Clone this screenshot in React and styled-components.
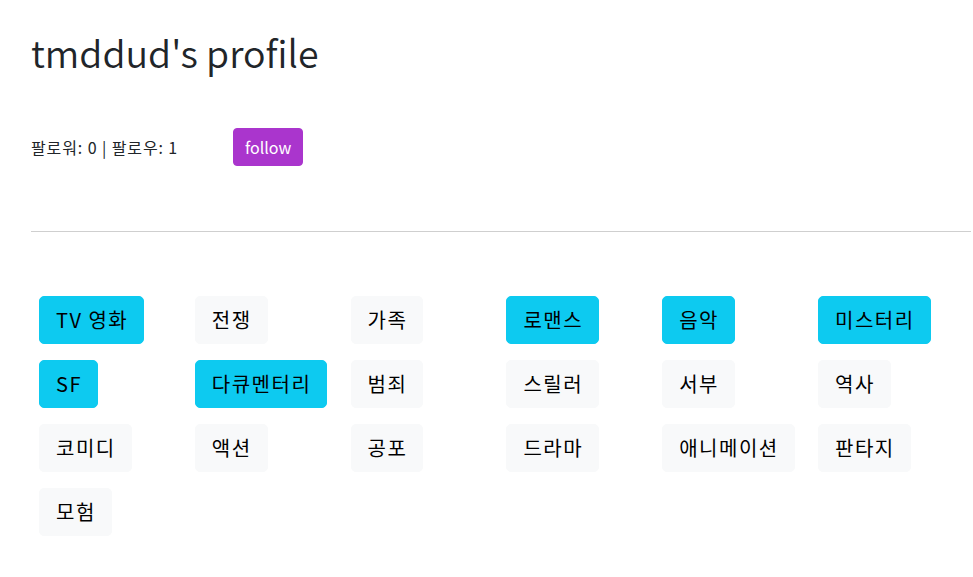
import React from "react";
import styled, { createGlobalStyle } from "styled-components";

const GlobalStyle = createGlobalStyle`
  body {
    margin: 0;
    background: #fff;
    color: #212529;
    font-family: "Noto Sans CJK KR", "Noto Sans", sans-serif;
  }
`;

const genres = [
  { name: "TV 영화", active: true },
  { name: "전쟁", active: false },
  { name: "가족", active: false },
  { name: "로맨스", active: true },
  { name: "음악", active: true },
  { name: "미스터리", active: true },
  { name: "SF", active: true },
  { name: "다큐멘터리", active: true },
  { name: "범죄", active: false },
  { name: "스릴러", active: false },
  { name: "서부", active: false },
  { name: "역사", active: false },
  { name: "코미디", active: false },
  { name: "액션", active: false },
  { name: "공포", active: false },
  { name: "드라마", active: false },
  { name: "애니메이션", active: false },
  { name: "판타지", active: false },
  { name: "모험", active: false },
];

export default function App() {
  return (
    <>
      <GlobalStyle />
      <ProfilePage>
        <ProfileTitle>tmddud's profile</ProfileTitle>
        <StatsRow>
          <FollowStats>팔로워: 0 | 팔로우: 1</FollowStats>
          <FollowButton>follow</FollowButton>
        </StatsRow>
        <Divider />
        <GenreGrid>
          {genres.map((genre) => (
            <GenreCell key={genre.name}>
              <GenreTag active={genre.active ? 1 : 0}>{genre.name}</GenreTag>
            </GenreCell>
          ))}
        </GenreGrid>
      </ProfilePage>
    </>
  );
}

const ProfilePage = styled.div`
  padding: 28px 0 0 31px;
`;

const ProfileTitle = styled.h1`
  margin: 0;
  font-size: 37.5px;
  font-weight: 350;
  line-height: 48px;
`;

const StatsRow = styled.div`
  display: flex;
  align-items: center;
  margin-top: 52px;
`;

const FollowStats = styled.span`
  width: 202px;
  font-size: 16px;
  letter-spacing: 0.9px;
`;

const FollowButton = styled.button`
  font-family: inherit;
  font-size: 16px;
  line-height: 24px;
  height: 38px;
  padding: 6px 11px;
  color: #fff;
  background: #aa35cd;
  border: 1px solid #aa35cd;
  border-radius: 4px;
`;

const Divider = styled.hr`
  margin: 65px 0 0;
  border: 0;
  border-top: 1px solid #cfcfcf;
  width: 940px;
`;

const GenreGrid = styled.div`
  display: grid;
  grid-template-columns: repeat(6, 155.8px);
  margin-top: 56px;
`;

const GenreCell = styled.div`
  padding: 8px;
`;

const GenreTag = styled.button`
  font-family: inherit;
  font-size: 20px;
  line-height: 30px;
  letter-spacing: 1.5px;
  height: 48px;
  padding: 8px 15px 8px 16px;
  color: #000;
  background: ${(props) => (props.active ? "#0dcaf0" : "#f8f9fa")};
  border: 1px solid ${(props) => (props.active ? "#0dcaf0" : "#f8f9fa")};
  border-radius: 5px;
`;
